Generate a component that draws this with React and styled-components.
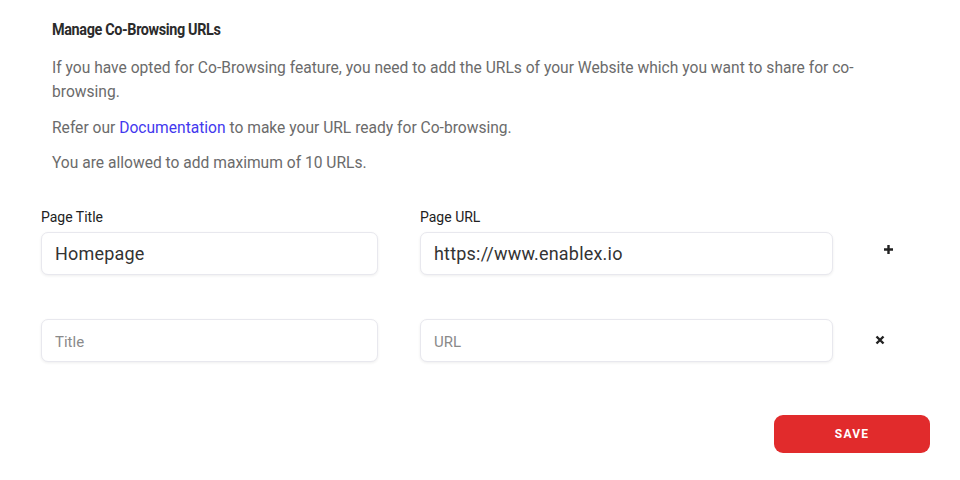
import React from "react";
import styled, { createGlobalStyle } from "styled-components";

const GlobalStyle = createGlobalStyle`
  body {
    margin: 0;
    background: #ffffff;
    font-family: Roboto, "Liberation Sans", sans-serif;
  }
`;

const rows = [
  { title: "Homepage", url: "https://www.enablex.io", action: "add" },
  { title: "", url: "", action: "remove" },
];

const PlusIcon = () => (
  <svg width="11" height="11" viewBox="0 0 11 11">
    <path d="M5.5 1v9M1 5.5h9" stroke="#222" strokeWidth="2.4" />
  </svg>
);

const CrossIcon = () => (
  <svg width="10" height="10" viewBox="0 0 10 10">
    <path d="M1.5 1.5l7 7M8.5 1.5l-7 7" stroke="#222" strokeWidth="2.4" />
  </svg>
);

const App = () => {
  return (
    <Wrapper>
      <GlobalStyle />
      <Intro>
        <Heading>Manage Co-Browsing URLs</Heading>
        <Text>
          If you have opted for Co-Browsing feature, you need to add the URLs of
          your Website which you want to share for co-browsing.
        </Text>
        <Text>
          Refer our <DocLink href="#">Documentation</DocLink> to make your URL
          ready for Co-browsing.
        </Text>
        <Text>You are allowed to add maximum of 10 URLs.</Text>
      </Intro>

      <Form>
        <Label>Page Title</Label>
        <Label>Page URL</Label>
        <span />
        {rows.map((row, i) => (
          <React.Fragment key={i}>
            <Field
              $gapTop={i > 0}
              defaultValue={row.title}
              placeholder="Title"
            />
            <Field $gapTop={i > 0} defaultValue={row.url} placeholder="URL" />
            <IconButton
              $gapTop={i > 0}
              $shift={row.action === "add" ? 8 : 0}
              $lift={row.action === "add" ? 4 : 1}
            >
              {row.action === "add" ? <PlusIcon /> : <CrossIcon />}
            </IconButton>
          </React.Fragment>
        ))}
      </Form>

      <Footer>
        <SaveButton>SAVE</SaveButton>
      </Footer>
    </Wrapper>
  );
};

const Wrapper = styled.div`
  width: 960px;
  height: 480px;
  box-sizing: border-box;
  padding: 20px 0 0 41px;
`;

const Intro = styled.div`
  padding-left: 11px;
`;

const Heading = styled.h3`
  margin: 0 0 16px;
  font-size: 16px;
  line-height: 20px;
  font-weight: 700;
  letter-spacing: -0.4px;
  color: #2b2b2b;
  transform: scaleX(0.9);
  transform-origin: left center;
`;

const Text = styled.p`
  margin: 0 0 11.5px;
  width: 836px;
  font-size: 15.6px;
  line-height: 24px;
  color: #6b6b6b;
`;

const DocLink = styled.a`
  color: #4338ee;
  text-decoration: none;
`;

const Form = styled.div`
  display: grid;
  grid-template-columns: 337px 413px 60px;
  column-gap: 42px;
  margin-top: 34px;
`;

const Label = styled.label`
  font-size: 14px;
  font-weight: 400;
  color: #222222;
  margin-bottom: 7px;
`;

const Field = styled.input`
  height: 43px;
  box-sizing: border-box;
  margin-top: ${(p) => (p.$gapTop ? "44px" : "0")};
  padding: 0 13px;
  border: 1px solid #e8e8ee;
  border-radius: 7px;
  box-shadow: 0 1px 3px rgba(0, 0, 0, 0.07);
  font-family: Roboto, "Liberation Sans", sans-serif;
  font-size: 18px;
  letter-spacing: 0.2px;
  color: #333333;
  outline: none;

  &::placeholder {
    font-size: 15px;
    letter-spacing: 0;
    color: #8a8a8a;
  }
`;

const IconButton = styled.button`
  display: flex;
  align-items: center;
  justify-content: flex-start;
  height: 43px;
  margin-top: ${(p) => (p.$gapTop ? "44px" : "0")};
  margin-left: ${(p) => p.$shift}px;
  padding: 0;
  border: none;
  background: none;
  cursor: pointer;
  transform: translateY(-${(p) => p.$lift}px);
`;

const Footer = styled.div`
  display: flex;
  justify-content: flex-end;
  width: 889px;
  margin-top: 53px;
`;

const SaveButton = styled.button`
  width: 156px;
  height: 38px;
  border: none;
  border-radius: 9px;
  background: #e12b2c;
  color: #ffffff;
  font-family: Roboto, "Liberation Sans", sans-serif;
  font-size: 12px;
  font-weight: 700;
  letter-spacing: 1.2px;
  cursor: pointer;
`;

export default App;
